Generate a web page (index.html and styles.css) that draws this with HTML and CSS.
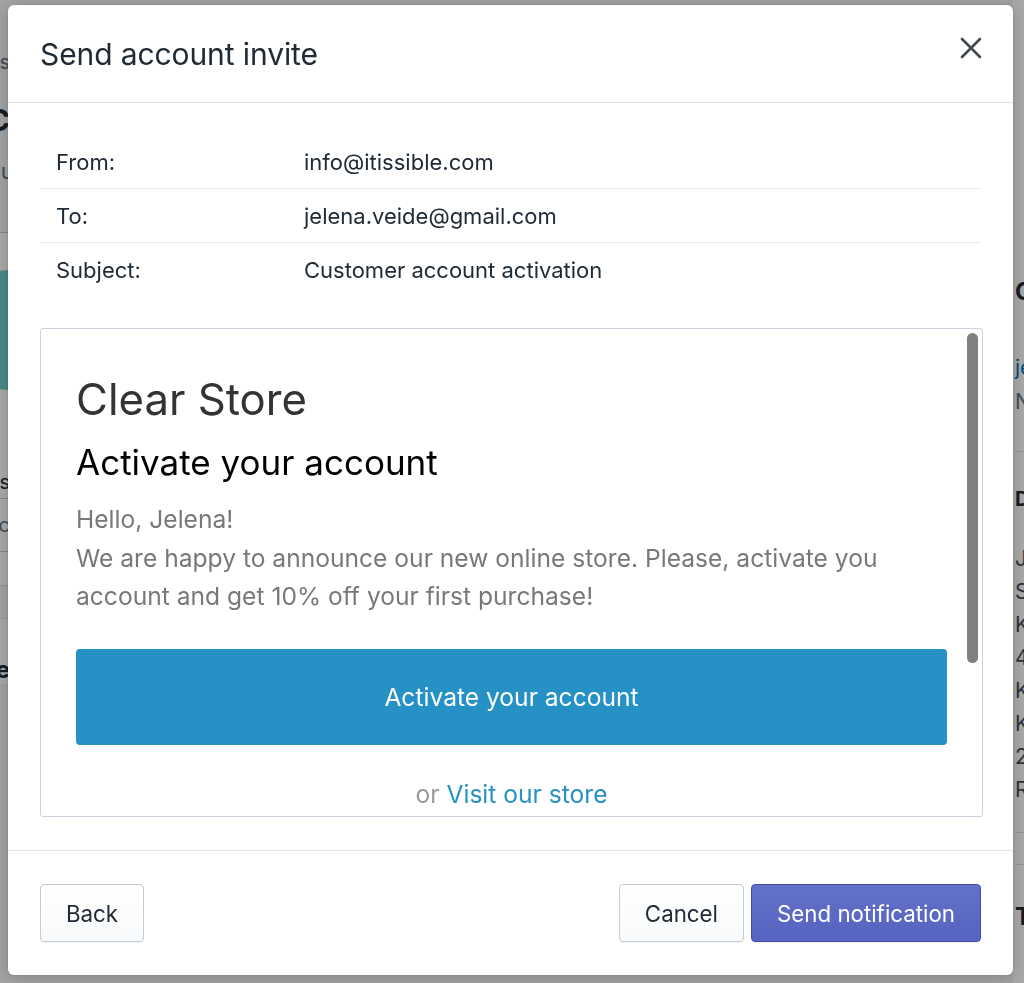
FILE: index.html
```html
<!DOCTYPE html>
<html lang="en">
<head>
<meta charset="utf-8">
<title>Send account invite</title>
<link rel="stylesheet" href="styles.css">
</head>
<body>
<div class="page">
  <div class="page-left">
    <div class="pl-crumb">Customers</div>
    <div class="pl-heading">Jelena Veide C</div>
    <div class="pl-sub">Customer for about one minute</div>
    <div class="pl-card">
      <div class="pl-avatar-row"><div class="pl-avatar"></div></div>
      <div class="pl-row pl-dark">Accept marketing status</div>
      <div class="pl-row pl-muted">Account status: Ac</div>
      <div class="pl-band"></div>
      <div class="pl-title">Recent orders place</div>
    </div>
  </div>
  <div class="page-main"></div>
  <div class="page-right">
    <div class="pr-title">Contact</div>
    <div class="pr-link">jelena.veide@gmail.com</div>
    <div class="pr-muted">No phone number</div>
    <div class="pr-divider"></div>
    <div class="pr-title pr-title-sm">Default address</div>
    <ul class="pr-address">
      <li>Jelena Veide</li>
      <li>Street 1</li>
      <li>Kalnciema</li>
      <li>4</li>
      <li>Kurzeme</li>
      <li>Kurzeme</li>
      <li>2</li>
      <li>Riga</li>
    </ul>
    <div class="pr-divider pr-divider-a"></div>
    <div class="pr-divider pr-divider-b"></div>
    <div class="pr-title pr-title-t">Tax settings</div>
  </div>
</div>

<div class="backdrop"></div>

<div class="modal-wrap">
  <div class="modal">
    <header class="modal-header">
      <h2 class="modal-title">Send account invite</h2>
      <button class="close-btn" aria-label="Close">
        <svg width="22" height="22" viewBox="0 0 22 22"><path d="M2 2 L20 20 M20 2 L2 20" stroke="#404850" stroke-width="2.6" stroke-linecap="round"/></svg>
      </button>
    </header>

    <div class="modal-body">
      <div class="meta">
        <div class="meta-row"><span class="meta-label">From:</span><span class="meta-value">info@itissible.com</span></div>
        <div class="meta-row"><span class="meta-label">To:</span><span class="meta-value">jelena.veide@gmail.com</span></div>
        <div class="meta-row"><span class="meta-label">Subject:</span><span class="meta-value">Customer account activation</span></div>
      </div>

      <div class="preview">
        <div class="preview-content">
          <h1 class="store-name">Clear Store</h1>
          <h2 class="mail-heading">Activate your account</h2>
          <p class="mail-text">Hello, Jelena!<br>We are happy to announce our new online store. Please, activate you account and get 10% off your first purchase!</p>
          <div class="mail-btn">Activate your account</div>
          <p class="mail-alt">or <a class="mail-link">Visit our store</a></p>
        </div>
        <div class="scroll-thumb"></div>
      </div>
    </div>

    <footer class="modal-footer">
      <button class="btn">Back</button>
      <div class="footer-right">
        <button class="btn">Cancel</button>
        <button class="btn btn-primary">Send notification</button>
      </div>
    </footer>
  </div>
</div>
</body>
</html>
```

FILE: styles.css
```css
* { box-sizing: border-box; }
html, body { margin: 0; padding: 0; }
body {
  font-family: Inter, "Noto Sans", "Liberation Sans", sans-serif;
  background: #f4f6f8;
  width: 1024px;
  height: 983px;
  overflow: hidden;
  color: #212b36;
}

/* ---------- page behind the modal ---------- */
.page {
  display: flex;
  height: 983px;
  overflow: hidden;
}
.page-left {
  width: 300px;
  margin-left: -290px;
  flex: none;
  text-align: right;
  white-space: nowrap;
}
.pl-crumb { margin-top: 50px; font-size: 20px; color: #637381; }
.pl-heading { margin-top: 26px; font-size: 30px; font-weight: 700; color: #212b36; line-height: 40px; }
.pl-sub { margin-top: 18px; font-size: 22px; color: #637381; }
.pl-card {
  margin-top: 48px;
  background: #fff;
  border-top: 1px solid #c4cdd5;
}
.pl-avatar-row { height: 212px; padding-top: 37px; display: flex; justify-content: flex-end; }
.pl-avatar { width: 120px; height: 120px; border-radius: 50%; background: #6fcfcb; margin-right: -60px; }
.pl-row { height: 28px; line-height: 28px; font-size: 20px; }
.pl-dark { height: 54px; padding-top: 26px; line-height: 22px; color: #212b36; border-bottom: 1px solid #c4cdd5; }
.pl-muted { height: 53px; line-height: 53px; color: #637381; border-bottom: 1px solid #c4cdd5; }
.pl-band { height: 34px; margin-top: 33px; background: #f4f6f8; border-top: 1px solid #dfe3e8; border-bottom: 1px solid #dfe3e8; }
.pl-title { margin-top: 36px; font-size: 24px; font-weight: 700; color: #212b36; }

.page-main { flex: 1; }

.page-right {
  width: 300px;
  margin-right: -289px;
  flex: none;
  background: #fff;
  white-space: nowrap;
  padding-left: 2px;
}
.pr-title { margin-top: 278px; font-size: 24px; font-weight: 700; color: #212b36; line-height: 28px; }
.pr-link { margin-top: 48px; font-size: 21px; color: #006fbb; line-height: 28px; }
.pr-muted { margin-top: 6px; font-size: 21px; color: #637381; line-height: 28px; }
.pr-divider { margin-top: 35px; height: 1px; background: #dfe3e8; }
.pr-title-sm { margin-top: 33px; font-size: 20px; }
.pr-address { list-style: none; margin: 29px 0 0; padding: 0; font-size: 21px; color: #454f5b; line-height: 33px; }
.pr-divider-a { margin-top: 26px; }
.pr-divider-b { margin-top: 31px; }
.pr-title-t { margin-top: 38px; font-size: 24px; }

/* ---------- backdrop ---------- */
.backdrop {
  position: fixed;
  inset: 0;
  background: rgba(0, 0, 0, 0.34);
}

/* ---------- modal ---------- */
.modal-wrap {
  position: fixed;
  inset: 0;
  padding: 5px 11px 8px 8px;
}
.modal {
  height: 100%;
  background: #fff;
  border-radius: 6px;
  display: flex;
  flex-direction: column;
  overflow: hidden;
  box-shadow: 0 0 0 1px rgba(0,0,0,0.04), 0 2px 16px rgba(0,0,0,0.2);
}
.modal-header {
  height: 98px;
  flex: none;
  display: flex;
  align-items: center;
  justify-content: space-between;
  padding: 0 31px 0 32px;
  border-bottom: 1px solid #e1e4e8;
}
.modal-title {
  margin: 0;
  font-size: 30px;
  font-weight: 400;
  color: #212b36;
  letter-spacing: -0.1px;
}
.close-btn {
  border: 0;
  background: none;
  padding: 0;
  width: 22px;
  height: 22px;
  display: flex;
  position: relative;
  top: -6px;
}

.modal-body {
  flex: 1;
  padding: 32px 32px 33px;
  display: flex;
  flex-direction: column;
}
.meta-row {
  height: 54px;
  display: flex;
  align-items: center;
  font-size: 22px;
  color: #212b36;
  border-bottom: 1px solid #e6e9ec;
}
.meta-row:last-child { border-bottom: 0; }
.meta-label { width: 264px; padding-left: 16px; flex: none; }

.preview {
  margin-top: 31px;
  margin-right: -2px;
  height: 489px;
  border: 1px solid #c9d3de;
  border-radius: 3px;
  position: relative;
  overflow: hidden;
}
.preview-content {
  padding: 40px 35px 0 35px;
}
.store-name {
  margin: 0;
  font-size: 43.7px;
  font-weight: 400;
  color: #333;
  line-height: 62px;
}
.mail-heading {
  margin: 0;
  font-size: 35px;
  font-weight: 400;
  color: #000;
  line-height: 62px;
}
.mail-text {
  margin: 0;
  padding-top: 7px;
  font-size: 24.6px;
  line-height: 38.5px;
  color: #787878;
}
.mail-btn {
  margin-top: 33px;
  height: 96px;
  border-radius: 4px;
  background: #2591c5;
  color: #fff;
  font-size: 24.6px;
  display: flex;
  align-items: center;
  justify-content: center;
}
.mail-alt {
  margin: 34px 0 0;
  text-align: center;
  font-size: 24.6px;
  color: #999;
}
.mail-link { color: #2591c5; }

.scroll-thumb {
  position: absolute;
  top: 4px;
  right: 4px;
  width: 11px;
  height: 330px;
  border-radius: 6px;
  background: #808080;
}

.modal-footer {
  flex: none;
  height: 125px;
  border-top: 1px solid #e1e4e8;
  padding: 33px 32px;
  display: flex;
  justify-content: space-between;
}
.footer-right { display: flex; gap: 7px; }
.btn {
  height: 58px;
  padding: 0 25px;
  border: 1px solid #c4cdd5;
  border-radius: 4px;
  background: linear-gradient(#fff, #f9fafb);
  box-shadow: 0 1px 0 rgba(22,29,37,0.05);
  font-family: inherit;
  font-size: 22.3px;
  color: #212b36;
}
.btn-primary {
  background: linear-gradient(#6371c7, #5563c1);
  border-color: #3f4eae;
  color: #fff;
}
```
